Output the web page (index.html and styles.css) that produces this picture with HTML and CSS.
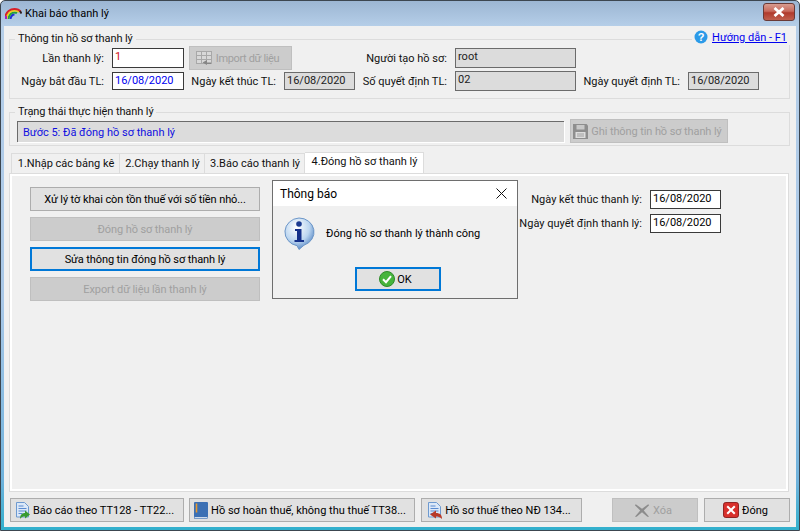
FILE: index.html
```html
<!DOCTYPE html>
<html lang="vi">
<head>
<meta charset="utf-8">
<title>Khai báo thanh lý</title>
<link rel="stylesheet" href="styles.css">
</head>
<body>
<div class="window">
  <header class="titlebar">
    <svg class="app-icon" width="17" height="11" viewBox="0 0 17 11"><g fill="none" stroke-width="2"><path d="M5.500 11C6 8 7.500 6.500 9.500 6.500" stroke="#2030d8"/><path d="M3.500 11C4 6.500 6.500 4.500 9.500 4.500c1 0 2 .2 2.500.6" stroke="#20a040"/><path d="M1.500 11C2 5 6 2.500 9.500 2.500c2 0 3.500.6 4.500 1.600" stroke="#e8d020"/><path d="M0 10C1 3.500 5.500 1 9.500 1c3 0 5 1 6 2.500" stroke="#d82028"/><path d="M1 11V8" stroke="#a020c0"/><path d="M15 3l1.500 2.500" stroke="#302020"/></g></svg>
    <span class="title-text">Khai báo thanh lý</span>
    <button class="win-close" aria-label="Đóng"><svg width="14" height="10" viewBox="0 0 14 10"><path d="M2.500 1l9 8M11.500 1l-9 8" stroke="#fff" stroke-width="2.800" fill="none"/></svg></button>
  </header>
  <main class="client">
    <a class="help" href="#"><svg width="14" height="14" viewBox="0 0 14 14"><circle cx="7" cy="7" r="6.500" fill="#2b9ae8"/><text x="7" y="10.500" text-anchor="middle" class="help-q">?</text></svg><span class="help-text">Hướng dẫn - F1</span></a>
    <fieldset class="group">
      <legend>Thông tin hồ sơ thanh lý</legend>
      <div class="row row-a">
        <label class="lbl w94">Lần thanh lý:</label>
        <div class="input red w72">1</div>
        <button class="btn off import"><svg width="16" height="14" viewBox="0 0 16 14"><rect x=".5" y=".5" width="15" height="12" fill="#d8d8d8" stroke="#a8a8a8"/><path d="M1 4.500h14M1 8.500h14M5.500 1v12M10.500 1v12" stroke="#a8a8a8"/><path d="M15 11.500H11V9L6.500 11.500 11 14v-1h4z" fill="#868686"/></svg><span>Import dữ liệu</span></button>
        <label class="lbl w150">Người tạo hồ sơ:</label>
        <div class="ro w121 tall">root</div>
      </div>
      <div class="row row-b">
        <label class="lbl w94">Ngày bắt đầu TL:</label>
        <div class="input blue w72 short">16/08/2020</div>
        <label class="lbl w86 ml6">Ngày kết thúc TL:</label>
        <div class="ro w71 short">16/08/2020</div>
        <label class="lbl w85 ml7">Số quyết định TL:</label>
        <div class="ro w121 tall">02</div>
        <label class="lbl w97 ml7">Ngày quyết định TL:</label>
        <div class="ro w71 short">16/08/2020</div>
      </div>
    </fieldset>
    <fieldset class="group group-b">
      <legend>Trạng thái thực hiện thanh lý</legend>
      <div class="row row-a">
        <div class="ro status">Bước 5: Đã đóng hồ sơ thanh lý</div>
        <button class="btn off save"><svg width="15" height="15" viewBox="0 0 15 15"><path d="M0 0h13.500L15 1.500V15H0z" fill="#8e8e8e"/><rect x="3.500" y="1" width="8" height="4.500" fill="#c8c8c8"/><rect x="2.500" y="8" width="10" height="6" fill="#dedede"/><path d="M4 10h7M4 12h7" stroke="#a0a0a0"/></svg><span>Ghi thông tin hồ sơ thanh lý</span></button>
      </div>
    </fieldset>
    <nav class="tabs">
      <div class="tab t1">1.Nhập các bảng kê</div>
      <div class="tab t2">2.Chạy thanh lý</div>
      <div class="tab t3">3.Báo cáo thanh lý</div>
      <div class="tab t4 active">4.Đóng hồ sơ thanh lý</div>
    </nav>
    <section class="panel">
      <div class="actions">
        <button class="btn act">Xử lý tờ khai còn tồn thuế với số tiền nhỏ...</button>
        <button class="btn act off">Đóng hồ sơ thanh lý</button>
        <button class="btn act focus">Sửa thông tin đóng hồ sơ thanh lý</button>
        <button class="btn act off">Export dữ liệu lần thanh lý</button>
      </div>
      <div class="dates">
        <label class="lbl">Ngày kết thúc thanh lý:</label>
        <div class="input date">16/08/2020</div>
        <label class="lbl">Ngày quyết định thanh lý:</label>
        <div class="input date">16/08/2020</div>
      </div>
    </section>
    <footer class="bottom">
      <button class="btn b1"><svg width="14" height="17" viewBox="0 0 14 17"><path d="M.5.500h8l4 4V15H.5z" fill="#dbe8f8" stroke="#6e9ad0"/><path d="M2.500 4h5M2.500 6.500h8M2.500 9h8M2.500 11.500h4" stroke="#5a8ad0"/><path d="M4 17c0-4 2-6 5-6V8.500l5 4-5 4v-2c-2 0-4 .5-5 2.500z" fill="#3a9a30"/></svg><span>Báo cáo theo TT128 - TT22...</span></button>
      <button class="btn b2"><svg width="14" height="17" viewBox="0 0 14 17"><rect x=".5" y="14" width="13" height="2.500" fill="#cfdcec" stroke="#3c70b4" stroke-width=".6"/><rect x="0" y="0" width="14" height="15" rx="1" fill="#3c70b4"/><path d="M2.500 1.500v9" stroke="#e89a30" stroke-width="1.600"/></svg><span>Hồ sơ hoàn thuế, không thu thuế TT38...</span></button>
      <button class="btn b3"><svg width="14" height="17" viewBox="0 0 14 17"><path d="M.5.500h8l4 4V15H.5z" fill="#dbe8f8" stroke="#6e9ad0"/><path d="M2.500 4h5M2.500 6.500h8M2.500 9h8M2.500 11.500h4" stroke="#5a8ad0"/><path d="M14 17c0-4-2-6-6-6V8.500l-6 4 6 4v-2c2 0 4 .5 6 2.500z" fill="#b83a28"/></svg><span>Hồ sơ thuế theo NĐ 134...</span></button>
      <div class="spacer"></div>
      <button class="btn off b4"><svg width="16" height="15" viewBox="0 0 18 16"><path d="M2 1l7 5 7-5 1 1-6 6 6 7-2 0-6-5-6 5H1l6-7-6-6z" fill="#8c8c8c"/></svg><span>Xóa</span></button>
      <button class="btn b5"><svg width="16" height="16" viewBox="0 0 17 17"><rect x=".5" y=".5" width="16" height="16" rx="2.500" fill="#d8302c" stroke="#8a1c1c"/><path d="M4.500 4.500l8 8M12.500 4.500l-8 8" stroke="#fff" stroke-width="2.200"/></svg><span>Đóng</span></button>
    </footer>
  </main>
  <div class="dialog" role="dialog">
    <div class="dlg-title"><span>Thông báo</span><svg width="11" height="11" viewBox="0 0 11 11"><path d="M.5.500l10 10M10.500.500l-10 10" stroke="#111" fill="none"/></svg></div>
    <div class="dlg-body">
      <svg class="dlg-icon" width="32" height="33" viewBox="0 0 32 33"><defs><radialGradient id="ib" cx=".4" cy=".3" r=".8"><stop offset="0" stop-color="#fff"/><stop offset=".55" stop-color="#bcd6f0"/><stop offset="1" stop-color="#3a70b8"/></radialGradient></defs><path d="M16 1a15 14 0 0 1 5 27.200L16 32.500l-2-3.800A15 14 0 0 1 16 1z" fill="url(#ib)" stroke="#6c96c8"/><circle cx="16" cy="7" r="2.800" fill="#1a3a90"/><path d="M12 12h6.500v11H21v2H11.500v-2H14v-9h-2z" fill="#14308a"/></svg>
      <div class="dlg-msg">Đóng hồ sơ thanh lý thành công</div>
    </div>
    <div class="dlg-foot">
      <button class="btn focus ok"><svg width="16" height="16" viewBox="0 0 16 16"><circle cx="8" cy="8" r="7.500" fill="#46b43c" stroke="#2e8a2a"/><path d="M4 8.200l3 3 5-6" stroke="#fff" stroke-width="2" fill="none"/></svg><span>OK</span></button>
    </div>
  </div>
</div>
</body>
</html>
```
FILE: styles.css
```css
* { box-sizing: border-box; }
html, body { margin: 0; padding: 0; }
body { width: 800px; height: 531px; overflow: hidden; font-family: Roboto, "Liberation Sans", Arial, sans-serif; font-size: 11px; color: #000; }
svg { flex: none; }

.window { position: relative; width: 800px; height: 531px; display: flex; flex-direction: column; border: 1px solid #3c4650; border-radius: 5px 5px 0 0; background: linear-gradient(180deg, #9cb6d3 0, #b6cfe9 26px, #a9c8e8 300px, #6fb2dc 480px, #2fb0cc 531px); padding: 0 3px 3px; }

.titlebar { height: 25px; flex: none; display: flex; align-items: center; padding-left: 1px; }
.app-icon { margin-right: 3px; }
.title-text { font-size: 11px; color: #000; }
.win-close { margin-left: auto; margin-right: 1px; margin-top: -3px; width: 32px; height: 18px; padding: 0; display: flex; align-items: center; justify-content: center; border: 1px solid #6a3a36; border-radius: 3px; background: linear-gradient(180deg, #d89c90 0, #c86a5c 45%, #b03a2c 55%, #c0604e 100%); }

.client { position: relative; flex: 1; min-height: 0; display: flex; flex-direction: column; background: #f0f0f0; }

.help { position: absolute; right: 6px; top: 3px; height: 16px; padding: 0 3px 0 2px; display: flex; align-items: center; gap: 4px; background: #f0f0f0; color: #0000f0; z-index: 1; }
.help-q { font: bold 11px "Liberation Sans", sans-serif; fill: #fff; }
.help-text { text-decoration: underline; }

.group { margin: 6px 6px 0 5px; padding: 0; border: 1px solid #dcdcdc; min-width: 0; }
.group legend { margin-left: 5px; padding: 0 3px; height: 14px; line-height: 14px; font-size: 11px; letter-spacing: -0.1px; color: #111; }
.group-b { padding-bottom: 2px; }

.row { display: flex; align-items: center; }
.row-a { height: 24px; }
.row-b { height: 20px; margin: 1px 0 7px; }

.lbl { flex: none; text-align: right; white-space: nowrap; margin-right: 8px; color: #111; }
.w94 { width: 94px; }
.w150 { width: 150px; }
.w86 { width: 86px; }
.w85 { width: 85px; }
.w97 { width: 97px; }
.ml6 { margin-left: 6px; }
.ml7 { margin-left: 7px; }
.w72 { width: 72px; }
.w71 { width: 71px; }
.w121 { width: 121px; }

.input, .ro { flex: none; height: 20px; padding: 0 2px; line-height: 15px; white-space: nowrap; }
.input { background: #fff; border: 1px solid #3a3a3a; }
.ro { background: #dcdcdc; border: 1px solid #6b6b6b; color: #222; }
.short { height: 18px; }
.tall { height: 20px; }
.red { color: #d01010; }
.blue { color: #0000f0; }

.status { width: 547px; height: 21px; margin-left: 7px; margin-right: 6px; padding: 3px 5px; border-width: 1px 0 0 1px; border-color: #6b6b6b; box-shadow: 1px 1px 0 #fff; color: #1010e0; }

.btn { flex: none; display: flex; align-items: center; justify-content: center; height: 24px; padding: 0; font: 11px Roboto, "Liberation Sans", Arial, sans-serif; color: #000; background: #e1e1e1; border: 1px solid #adadad; white-space: nowrap; }
.btn.off { background: #cccccc; border-color: #bfbfbf; color: #a0a0a0; }
.btn.focus { border: 2px solid #0078d7; }
.import { width: 103px; margin: 0 5px; gap: 4px; letter-spacing: -0.35px; padding-right: 6px; }
.save { width: 158px; gap: 3px; letter-spacing: -0.1px; padding-right: 3px; }
.act { letter-spacing: -0.1px; }

.tabs { flex: none; height: 21px; margin: 6px 0 0 7px; display: flex; align-items: flex-end; position: relative; z-index: 1; }
.tab { height: 20px; line-height: 19px; padding-left: 1px; text-align: center; background: #f0f0f0; border: 1px solid #dcdcdc; border-bottom: 0; border-left-width: 0; white-space: nowrap; color: #111; }
.t1 { width: 109px; border-left-width: 1px; }
.t2 { width: 85px; }
.t3 { width: 100px; }
.t4 { width: 119px; }
.tab.active { height: 21px; line-height: 18px; background: #fff; }

.panel { flex: 1; min-height: 0; margin: 0 7px 0 5px; padding: 13px 0 0 20px; display: flex; align-items: flex-start; border: 1px solid #dcdcdc; box-shadow: inset 0 0 0 2px #fff; }
.actions { flex: none; width: 230px; display: flex; flex-direction: column; gap: 6px; }
.act { width: 230px; }
.dates { flex: none; margin: 3px 0 0 255px; display: grid; grid-template-columns: 127px 71px; grid-auto-rows: 19px; row-gap: 5px; align-items: center; column-gap: 8px; }
.dates .lbl { margin-right: 0; }
.date { width: 71px; height: 19px; }

.bottom { flex: none; height: 24px; margin: 6px 6px 5px 6px; display: flex; }
.bottom .btn { gap: 3px; }
.b1 { width: 174px; padding-right: 4px; }
.b2 { width: 226px; margin-left: 5px; padding-right: 4px; }
.b3 { width: 161px; margin-left: 6px; padding-right: 4px; }
.spacer { flex: 1; }
.b4 { width: 86px; gap: 5px; padding-right: 4px; }
.b5 { width: 86px; margin-left: 6px; padding-right: 3px; }

.dialog { position: absolute; left: 271px; top: 179px; width: 246px; height: 119px; display: flex; flex-direction: column; background: #f0f0f0; border: 1px solid #6e6e6e; z-index: 5; }
.dlg-title { flex: none; height: 25px; padding: 0 10px 0 7px; display: flex; align-items: center; justify-content: space-between; background: #fff; font-size: 12px; }
.dlg-body { flex: 1; display: flex; align-items: center; padding: 0 0 6px 10px; }
.dlg-icon { margin-right: 11px; }
.dlg-msg { font-size: 11px; }
.dlg-foot { flex: none; height: 31px; padding-left: 6px; display: flex; justify-content: center; }
.ok { width: 86px; height: 24px; gap: 2px; padding-right: 5px; }
```
